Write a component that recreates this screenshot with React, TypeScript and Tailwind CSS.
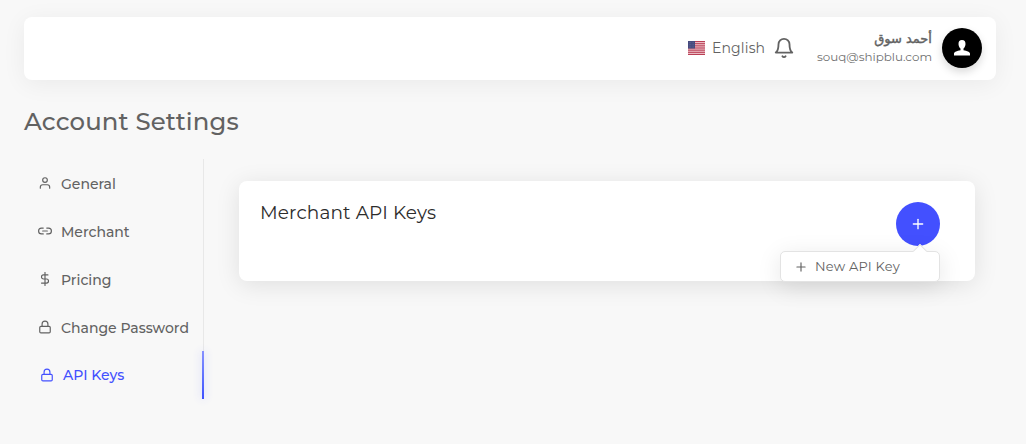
import { FiBell, FiDollarSign, FiLink2, FiLock, FiPlus, FiUser } from "react-icons/fi";
import type { IconType } from "react-icons";

function UsFlag() {
  const stripes = [0, 2, 4, 6, 8, 10, 12];
  return (
    <svg width="17" height="14" viewBox="0 0 17 13" preserveAspectRatio="none" className="shrink-0">
      <rect width="17" height="13" fill="#eec5cc" />
      {stripes.map((y) => (
        <rect key={y} y={y} width="17" height="1" fill="#b93f55" />
      ))}
      <rect width="7" height="7" fill="#464b7f" />
      <path d="M1 1.5h5M1 3.5h5M1 5.5h5" stroke="#8588ae" strokeWidth=".5" strokeDasharray=".6 .8" />
    </svg>
  );
}

function Header() {
  return (
    <header className="flex h-[63px] items-center justify-end rounded-lg bg-white pr-[14px] pb-px shadow-[0_4px_25px_0_rgba(0,0,0,0.06)]">
      <UsFlag />
      <span className="ml-[7px] w-[52px] pt-px whitespace-nowrap text-[14px] text-[#626262]">English</span>
      <FiBell className="ml-[9px] size-[22px] text-[#626262]" />
      <div className="ml-[21px] flex w-[116px] flex-col items-end whitespace-nowrap">
        <span className="h-[18px] font-['DejaVu_Sans',sans-serif] text-[13px] leading-[18px] tracking-normal text-[#626262] [-webkit-text-stroke:0.4px_#626262]">أحمد سوق</span>
        <span className="h-[18px] text-[11.9px] leading-[18px] text-[#717171] tracking-normal">souq@shipblu.com</span>
      </div>
      <div className="ml-[10px] flex size-10 items-center justify-center rounded-full bg-black shadow-[0_4px_8px_0_rgba(0,0,0,0.15)]">
        <svg width="16" height="16" viewBox="0 0 16 16" fill="white">
          <path d="M8 0C5.500 0 4.500 1.500 4.500 4c0 1.900.800 3.500 2 4.500v1.700C3 11 0 11.600 0 13.600V15.500h16v-1.900c0-2-3-2.600-6.500-3.400V8.500c1.200-1 2-2.600 2-4.500C11.500 1.500 10.500 0 8 0Z" />
        </svg>
      </div>
    </header>
  );
}

const items: { label: string; icon: IconType }[] = [
  { label: "General", icon: FiUser },
  { label: "Merchant", icon: FiLink2 },
  { label: "Pricing", icon: FiDollarSign },
  { label: "Change Password", icon: FiLock },
];

function Sidebar() {
  return (
    <nav className="flex w-[180px] flex-col text-[14px] font-medium tracking-normal text-[#626262]">
      <ul className="border-r border-[#e8e8e8]">
        {items.map(({ label, icon: Icon }) => (
          <li key={label} className="flex h-12 items-center whitespace-nowrap pl-[14px]">
            <Icon className="size-[14px] shrink-0" />
            <span className="ml-[9px] pt-0.5">{label}</span>
          </li>
        ))}
      </ul>
      <div className="flex h-12 text-[#4350ff]">
        <div className="flex flex-1 items-center pl-4">
          <FiLock className="size-[14px]" />
          <span className="ml-[9px]">API Keys</span>
        </div>
        <div className="w-0.5 bg-linear-to-b from-[#8790ff] to-[#4050ff] shadow-[0_0_8px_0_rgba(67,80,255,0.3)]" />
      </div>
    </nav>
  );
}

function ApiKeysCard() {
  return (
    <section className="relative mt-[22px] flex h-[100px] flex-1 justify-between rounded-lg bg-white pt-[21px] pr-[35px] pl-[21px] shadow-[0_4px_25px_0_rgba(0,0,0,0.1)]">
      <h2 className="text-[18.48px] leading-[21px] font-normal text-[#2c2c2c]">Merchant API Keys</h2>
      <button className="flex size-11 items-center justify-center rounded-full bg-[#4350ff] text-white">
        <FiPlus className="size-4" />
      </button>
      <div className="absolute top-[70px] right-[35px] flex h-[31px] w-[160px] items-center rounded-[5px] border border-[#e3e3e3] bg-white pl-[13px] text-[#626262] shadow-[0_5px_25px_0_rgba(0,0,0,0.1)]">
        <div className="absolute -top-[6px] right-[14px] size-[10px] rotate-45 border-t border-l border-[#e3e3e3] bg-white" />
        <FiPlus className="size-[14px]" />
        <span className="ml-[7px] whitespace-nowrap text-[13px] tracking-[0.2px]">New API Key</span>
      </div>
    </section>
  );
}

export default function App() {
  return (
    <main className="h-[444px] w-[1026px] overflow-hidden bg-[#f8f8f8] px-6 pt-[17px] font-['Montserrat',Helvetica,Arial,serif] tracking-[0.14px]">
      <div className="w-[972px]">
        <Header />
        <h1 className="mt-[26px] h-[31px] text-[24.36px] leading-[31px] font-medium text-[#626262]">Account Settings</h1>
        <div className="mt-[22px] flex items-start gap-[35px] pr-[21px]">
          <Sidebar />
          <ApiKeysCard />
        </div>
      </div>
    </main>
  );
}
